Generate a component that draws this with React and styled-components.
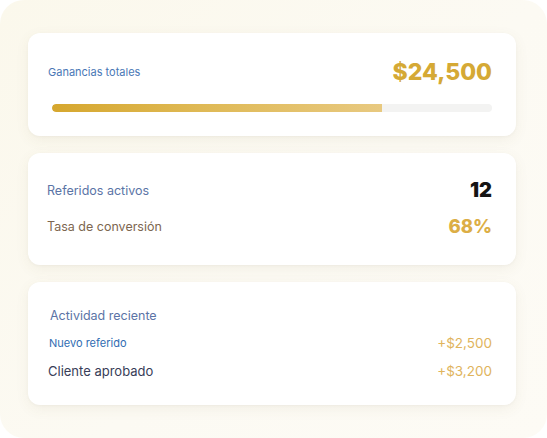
import React from 'react';
import styled, { createGlobalStyle } from 'styled-components';

const Global = createGlobalStyle`
  html, body {
    margin: 0;
    padding: 0;
    background: #ffffff;
    font-family: Inter, "Noto Sans", sans-serif;
  }
`;

const Panel = styled.div`
  width: 547px;
  height: 438px;
  box-sizing: border-box;
  border-radius: 24px;
  background: linear-gradient(135deg, #fbf8ec 0%, #fcfaf3 55%, #fdfbf5 100%);
  padding: 33px 31px 0 28px;
  display: flex;
  flex-direction: column;
  gap: 17px;
`;

const Card = styled.div`
  background: #ffffff;
  border-radius: 12px;
  box-shadow: 0 4px 14px rgba(120, 100, 60, 0.07), 0 1px 3px rgba(0, 0, 0, 0.03);
  padding: ${(p) => p.$pad};
  display: flex;
  flex-direction: column;
  gap: ${(p) => p.$gap || '0px'};
`;

const Row = styled.div`
  display: flex;
  align-items: center;
  justify-content: space-between;
  height: ${(p) => p.$h || 'auto'};
`;

const Label = styled.span`
  font-size: ${(p) => p.$size || '12px'};
  color: ${(p) => p.$color || '#5b74a6'};
  margin-left: ${(p) => p.$indent || '0px'};
`;

const Value = styled.span`
  font-size: ${(p) => p.$size || '20px'};
  font-weight: ${(p) => p.$weight || 800};
  color: ${(p) => p.$color || '#d5a935'};
`;

const Track = styled.div`
  margin: 17px 0 0 4px;
  height: 8px;
  border-radius: 4px;
  background: #f3f3f2;
  overflow: hidden;
`;

const Fill = styled.div`
  height: 100%;
  border-radius: 4px 0 0 4px;
  background: linear-gradient(90deg, #d6a72e 0%, #dfb955 45%, #e8c980 100%);
`;

const activity = [
  { label: 'Nuevo referido', amount: '+$2,500', size: '11px', color: '#2f6cb2', indent: '1px' },
  { label: 'Cliente aprobado', amount: '+$3,200', size: '13px', color: '#383d58', indent: '0px' },
];

export default function App() {
  const progress = 75;
  return (
    <>
      <Global />
      <Panel>
        <Card $pad="24px 24px 24px 20px">
          <Row $h="30px">
            <Label $size="11px" $color="#4a78b6">Ganancias totales</Label>
            <Value $size="23px" $weight={800}>$24,500</Value>
          </Row>
          <Track>
            <Fill style={{ width: `${progress}%` }} />
          </Track>
        </Card>

        <Card $pad="25px 24px 27px 19px" $gap="12px">
          <Row $h="24px">
            <Label $size="12.5px" $color="#5b74a6">Referidos activos</Label>
            <Value $size="20px" $weight={900} $color="#141414">12</Value>
          </Row>
          <Row $h="24px">
            <Label $size="12.5px" $color="#7d6650">Tasa de conversión</Label>
            <Value $size="18.5px" $weight={800} $color="#dcae45">68%</Value>
          </Row>
        </Card>

        <Card $pad="24px 24px 24px 20px">
          <Row $h="18px">
            <Label $size="12.5px" $color="#5b74a6" $indent="2px">Actividad reciente</Label>
          </Row>
          {activity.map((a, i) => (
            <Row key={i} $h="20px" style={{ marginTop: i === 0 ? '9px' : '8px' }}>
              <Label $size={a.size} $color={a.color} $indent={a.indent}>{a.label}</Label>
              <Value $size="13.5px" $weight={400} $color="#e0b45c">{a.amount}</Value>
            </Row>
          ))}
        </Card>
      </Panel>
    </>
  );
}
